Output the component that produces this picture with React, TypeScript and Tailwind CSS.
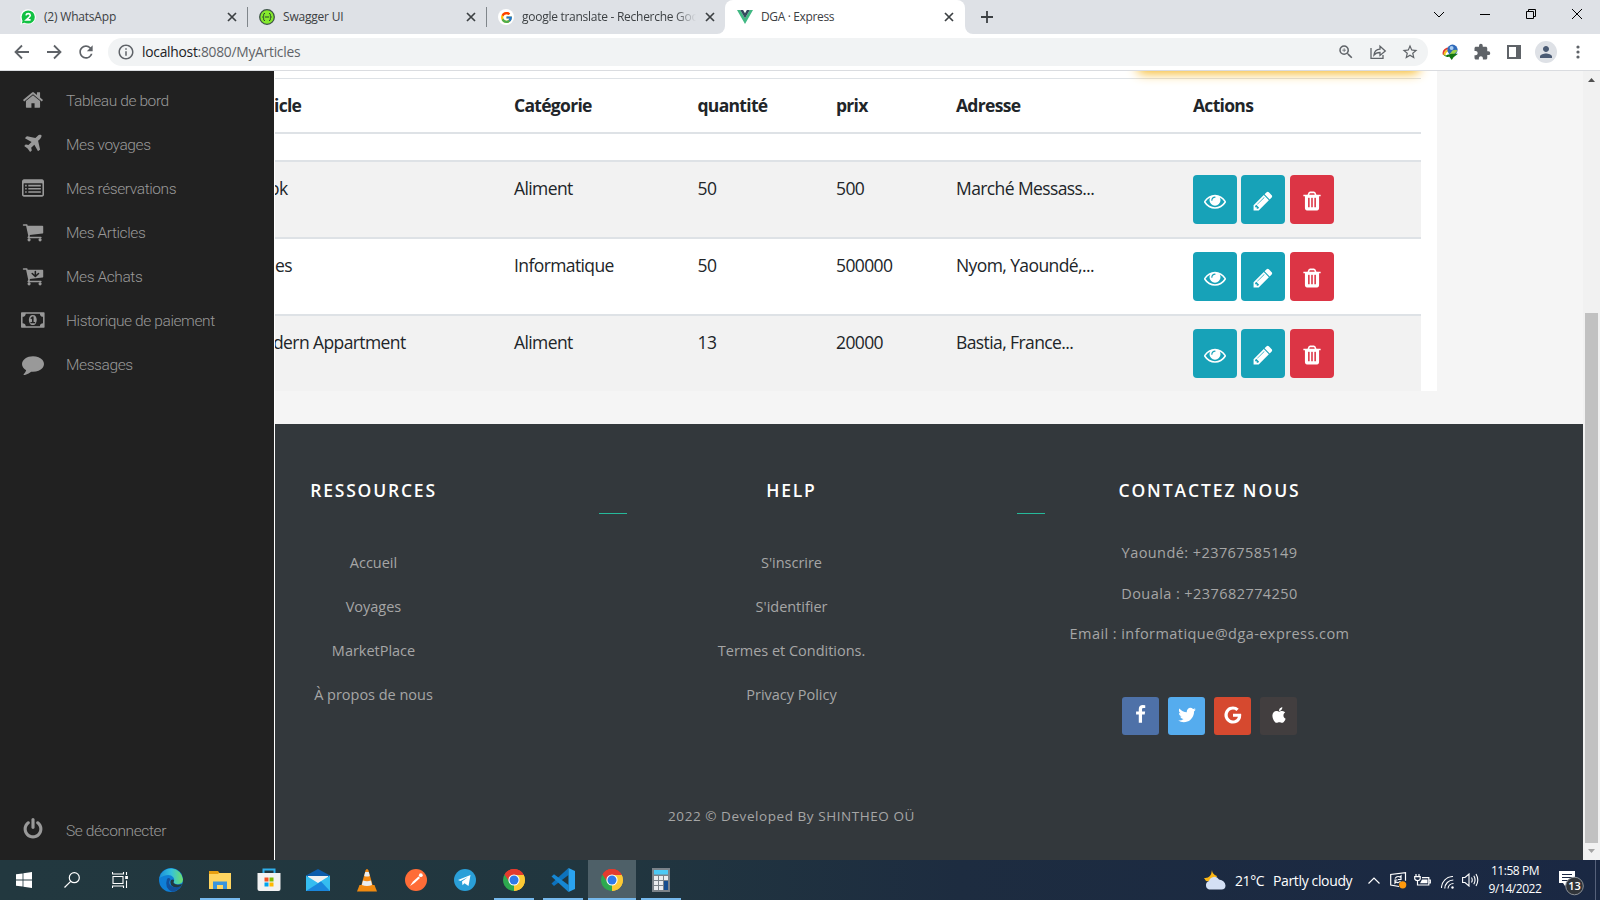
import React from "react";
import { FaApple } from "react-icons/fa";
import { FcGoogle } from "react-icons/fc";
import { MdExtension, MdInfoOutline, MdOutlineZoomIn, MdPerson, MdRefresh, MdStarBorder } from "react-icons/md";

const glyphs = {
  home: "M1472 992v480q0 26-19 45t-45 19h-384v-384h-256v384h-384q-26 0-45-19t-19-45v-480q0-1 .5-3t.5-3l575-474 575 474q1 2 1 6zm223-69l-62 74q-8 9-21 11h-3q-13 0-21-7l-692-577-692 577q-12 8-24 7-13-2-21-11l-62-74q-8-10-7-23.5t11-21.5l719-599q32-26 76-26t76 26l244 204v-195q0-14 9-23t23-9h192q14 0 23 9t9 23v408l219 182q10 8 11 21.5t-7 23.5z",
  plane: "M1568 160q44 52 12 148t-108 172l-161 161 160 696q5 19-12 33l-128 96q-7 6-19 6-4 0-7-1-15-3-21-16l-279-508-259 259 53 194q5 17-8 31l-96 96q-9 9-23 9h-2q-15-2-24-13l-189-252-252-189q-11-7-13-23-1-13 9-25l96-97q9-9 23-9 6 0 8 1l194 53 259-259-508-279q-14-8-17-24-2-16 9-27l128-128q14-13 30-8l665 159 160-160q76-76 172-108t148 12z",
  list: "M160 192h1472q66 0 113 47t47 113v1088q0 66-47 113t-113 47h-1472q-66 0-113-47t-47-113v-1088q0-66 47-113t113-47zM160 512q-32 0-32 32v896q0 32 32 32h1472q32 0 32-32v-896q0-32-32-32zM256 640h128v128h-128zM256 896h128v128h-128zM256 1152h128v128h-128zM512 640h1024v128h-1024zM512 896h1024v128h-1024zM512 1152h1024v128h-1024z",
  cart: "M704 1536q0 52-38 90t-90 38-90-38-38-90 38-90 90-38 90 38 38 90zm896 0q0 52-38 90t-90 38-90-38-38-90 38-90 90-38 90 38 38 90zm128-1088v512q0 24-16.5 42.5t-40.5 21.5l-1044 122q13 60 13 70 0 16-24 64h920q26 0 45 19t19 45-19 45-45 19h-1024q-26 0-45-19t-19-45q0-11 8-31.5t16-36 21.5-40 15.5-29.5l-177-823h-204q-26 0-45-19t-19-45 19-45 45-19h256q16 0 28.5 6.5t19.5 15.5 13 24.5 8 26 5.5 29.5 4.5 26h1201q26 0 45 19t19 45z",
  arrowDown: "M1408 697q0-26-19-45t-45-19q-26 0-45 19l-147 146v-270q0-26-19-45t-45-19-45 19-19 45v270l-147-146q-19-19-45-19t-45 19-19 45 19 45l256 230q19 19 45 19t45-19l256-230q19-19 19-45z",
  money: "M768 1152h384v-96h-128v-448h-114l-148 137 77 80q42-37 55-57h2v288h-128v96zm512-256q0 70-21 142t-59.5 134-101.5 101-138 39-138-39-101.5-101-59.5-134-21-142 21-142 59.5-134 101.5-101 138-39 138 39 101.5 101 59.5 134 21 142zm512 256v-512q-106 0-181-75t-75-181h-1152q0 106-75 181t-181 75v512q106 0 181 75t75 181h1152q0-106 75-181t181-75zm128-832v1152q0 26-19 45t-45 19h-1792q-26 0-45-19t-19-45v-1152q0-26 19-45t45-19h1792q26 0 45 19t19 45z",
  comment: "M1792 896q0 174-120 321.5t-326 233-450 85.5q-70 0-145-8-198 175-460 242-49 14-114 22-17 2-30.5-9t-17.5-29v-1q-3-4-.5-12t2-10 4.5-9.5l6-9 7-8.5 8-9q7-8 31-34.5t34.5-38 31-39.5 32.5-51 27-59 26-76q-157-89-247.5-220t-90.5-281q0-130 71-248.5t191-204.5 286-136.5 348-50.5q244 0 450 85.5t326 233 120 321.5z",
  power: "M1664 896q0 156-61 298t-164 245-245 164-298 61-298-61-245-164-164-245-61-298q0-182 80.5-343t226.5-270q43-32 95.5-25t83.5 50q32 42 24.5 94.5t-49.5 84.5q-98 74-151.5 181t-53.5 228q0 104 40.5 198.5t109.5 163.5 163.5 109.5 198.5 40.5 198.5-40.5 163.5-109.5 109.5-163.5 40.5-198.5q0-121-53.5-228t-151.5-181q-42-32-49.5-84.5t24.5-94.5q31-43 84-50t95 25q146 109 226.5 270t80.5 343zm-640-768v640q0 52-38 90t-90 38-90-38-38-90v-640q0-52 38-90t90-38 90 38 38 90z",
  eye: "M1664 960q-152-236-381-353 61 104 61 225 0 185-131.5 316.5t-316.5 131.5-316.5-131.5-131.5-316.5q0-121 61-225-229 117-381 353 133 205 333.5 326.5t434.5 121.5 434.5-121.5 333.5-326.5zm-720-384q0-20-14-34t-34-14q-125 0-214.5 89.5t-89.5 214.5q0 20 14 34t34 14 34-14 14-34q0-86 61-147t147-61q20 0 34-14t14-34zm848 384q0 34-20 69-140 230-376.5 368.5t-499.5 138.5-499.5-139-376.5-368q-20-35-20-69t20-69q140-229 376.5-368t499.5-139 499.5 139 376.5 368q20 35 20 69z",
  pencil: "M491 1536l91-91-235-235-91 91v107h128v128h107zm523-928q0-22-22-22-10 0-17 7l-542 542q-7 7-7 17 0 22 22 22 10 0 17-7l542-542q7-7 7-17zm-54-192l416 416-832 832h-416v-416zm683 96q0 53-37 90l-166 166-416-416 166-165q36-38 90-38 53 0 91 38l235 234q37 39 37 91z",
  trash: "M704 1376v-704q0-14-9-23t-23-9h-64q-14 0-23 9t-9 23v704q0 14 9 23t23 9h64q14 0 23-9t9-23zm256 0v-704q0-14-9-23t-23-9h-64q-14 0-23 9t-9 23v704q0 14 9 23t23 9h64q14 0 23-9t9-23zm256 0v-704q0-14-9-23t-23-9h-64q-14 0-23 9t-9 23v704q0 14 9 23t23 9h64q14 0 23-9t9-23zm-544-992h448l-48-117q-7-9-17-11h-317q-10 2-17 11zm928 32v64q0 14-9 23t-23 9h-96v948q0 83-47 143.5t-113 60.5h-832q-66 0-113-58.5t-47-141.5v-952h-96q-14 0-23-9t-9-23v-64q0-14 9-23t23-9h309l70-167q15-37 54-63t79-26h320q40 0 79 26t54 63l70 167h309q14 0 23 9t9 23z",
  facebook: "M1343 12v264h-157q-86 0-116 36t-30 108v189h293l-39 296h-254v759h-306v-759h-255v-296h255v-218q0-186 104-288.5t277-102.5q147 0 228 12z",
  twitter: "M1684 408q-67 98-162 167 1 14 1 42 0 130-38 259.5t-115.5 248.5-184.5 210.5-258 146-323 54.5q-271 0-496-145 35 4 78 4 225 0 401-138-105-2-188-64.5t-114-159.5q33 5 61 5 43 0 85-11-112-23-185.5-111.5t-73.5-205.5v-4q68 38 146 41-66-44-105-115t-39-154q0-88 44-163 121 149 294.5 238.5t371.5 99.5q-8-38-8-74 0-134 94.5-228.5t228.5-94.5q140 0 236 102 109-21 205-78-37 115-142 178 93-10 186-50z",
  google: "M896 786h725q12 67 12 128 0 217-91 387.5t-259.5 266.5-386.5 96q-157 0-299-60.5t-245-163.5-163.5-245-60.5-299 60.5-299 163.5-245 245-163.5 299-60.5q300 0 515 201l-209 201q-123-119-306-119-129 0-238.5 65t-173.5 176.5-64 243.5 64 243.5 173.5 176.5 238.5 65q87 0 160-24t120-60 82-82 51.5-87 22.5-78h-436v-264z",
};

type GlyphName = keyof typeof glyphs;

function Glyph({ d, wide = false, className = "size-[22px]" }: { d: string; wide?: boolean; className?: string }) {
  return (
    <svg viewBox={wide ? "0 0 1920 1792" : "0 0 1792 1792"} className={className} fill="currentColor" fillRule="evenodd">
      <path d={d} />
    </svg>
  );
}

/* ---------- Browser chrome ---------- */

function CloseX() {
  return (
    <svg viewBox="0 0 10 10" className="size-[10px] shrink-0" stroke="#3c4043" strokeWidth="1.7" fill="none">
      <path d="M1 1l8 8M9 1l-8 8" />
    </svg>
  );
}

function WhatsAppIcon() {
  return (
    <svg viewBox="0 0 16 16" className="size-4 shrink-0">
      <path d="M8.3.3a7.6 7.6 0 1 1-3.6 14.3L.3 15.8l1.2-4A7.6 7.6 0 0 1 8.3.3z" fill="#fff" />
      <circle cx="8.2" cy="8" r="6.6" fill="#12c143" />
      <path d="M1.8 14.4l1-3.4 2.4 2.4z" fill="#12c143" />
      <path d="M6 6.4Q6.3 4.6 8.2 4.6T10.3 6.3Q10.3 7.5 6.3 10.9H10.6" stroke="#fff" strokeWidth="1.6" fill="none" />
    </svg>
  );
}

function SwaggerIcon() {
  return (
    <svg viewBox="0 0 16 16" className="size-4 shrink-0">
      <circle cx="8" cy="8" r="7.3" fill="#85ea2d" stroke="#3d5347" strokeWidth="1.3" />
      <path d="M6 4.4q-1.4 0-1.4 1.3v1q0 1.2-1 1.3 1 .1 1 1.3v1q0 1.3 1.4 1.3M10 4.4q1.4 0 1.4 1.3v1q0 1.2 1 1.3-1 .1-1 1.3v1q0 1.3-1.4 1.3M5.8 8h4.4" stroke="#264030" strokeWidth="1" fill="none" />
    </svg>
  );
}

function VueIcon() {
  return (
    <svg viewBox="0 0 16 14" className="h-[14px] w-4 shrink-0">
      <path d="M0 0h3.2L8 8.3 12.8 0H16L8 14z" fill="#41b883" />
      <path d="M3.2 0h2.9L8 3.3 9.9 0h2.9L8 8.3z" fill="#35495e" />
    </svg>
  );
}

function TabStrip() {
  return (
    <div className="flex h-[34px] shrink-0 items-stretch bg-[#dee1e6] font-['Open_Sans',sans-serif] text-[12px] tracking-[-0.2px] text-[#3c4043]">
      <div className="flex w-[247px] items-center pl-5 pr-[10px]">
        <WhatsAppIcon />
        <span className="ml-2 flex-1 whitespace-nowrap">(2) WhatsApp</span>
        <CloseX />
      </div>
      <div className="my-[7px] w-px bg-[#80868b]" />
      <div className="flex w-[238px] items-center pl-[11px] pr-[10px]">
        <SwaggerIcon />
        <span className="ml-2 flex-1 whitespace-nowrap">Swagger UI</span>
        <CloseX />
      </div>
      <div className="my-[7px] w-px bg-[#80868b]" />
      <div className="flex w-[238px] items-center bg-white">
        <div className="flex h-full w-full items-center rounded-br-lg bg-[#dee1e6] pl-[11px] pr-[10px]">
          <span className="flex size-4 shrink-0 items-center justify-center rounded-full bg-white">
            <FcGoogle size={13} />
          </span>
          <span className="ml-2 w-[174px] overflow-hidden whitespace-nowrap tracking-[-0.27px] [mask-image:linear-gradient(90deg,#000_88%,transparent)]">
            google translate - Recherche Google
          </span>
          <span className="ml-auto flex">
            <CloseX />
          </span>
        </div>
      </div>
      <div className="w-[240px] bg-[#dee1e6]">
        <div className="flex h-full items-center rounded-t-lg bg-white pl-3 pr-[11px]">
          <VueIcon />
          <span className="ml-2 flex-1 whitespace-nowrap tracking-[-0.35px]">DGA · Express</span>
          <CloseX />
        </div>
      </div>
      <div className="flex-1 bg-white">
        <div className="flex h-full items-center rounded-bl-lg bg-[#dee1e6] pl-4">
          <svg viewBox="0 0 12 12" className="size-3" stroke="#3c4043" strokeWidth="1.8">
            <path d="M6 0v12M0 6h12" />
          </svg>
          <div className="ml-auto flex h-[28px] items-center self-start text-black">
            <svg viewBox="0 0 46 28" className="h-7 w-[46px]" stroke="currentColor" fill="none">
              <path d="M18 12l5 5 5-5" />
            </svg>
            <svg viewBox="0 0 46 28" className="h-7 w-[46px]" stroke="currentColor" fill="none">
              <path d="M18 14.5h10" />
            </svg>
            <svg viewBox="0 0 46 28" className="h-7 w-[46px]" stroke="currentColor" fill="none">
              <path d="M18.5 11.5h7v7h-7zM20.5 11.5v-2h7v7h-2" />
            </svg>
            <svg viewBox="0 0 46 28" className="h-7 w-[46px]" stroke="currentColor" fill="none">
              <path d="M18 9l10 10M28 9L18 19" />
            </svg>
          </div>
        </div>
      </div>
    </div>
  );
}

function Toolbar() {
  return (
    <div className="flex h-[37px] shrink-0 items-center border-b border-[#dadce0] bg-white text-[#5f6368]">
      <div className="flex w-[108px] items-center gap-[14px] pl-[13px]">
        <svg viewBox="0 0 18 18" className="size-[18px]" stroke="currentColor" strokeWidth="1.8" fill="none">
          <path d="M16 9H3M9 2.5L2.5 9 9 15.5" />
        </svg>
        <svg viewBox="0 0 18 18" className="size-[18px]" stroke="currentColor" strokeWidth="1.8" fill="none">
          <path d="M2 9h13M9 2.5L15.500 9 9 15.500" />
        </svg>
        <MdRefresh size={20} className="-ml-px" />
      </div>
      <div className="flex h-7 w-[1320px] items-center rounded-full bg-[#f1f3f4] pl-[9px] pr-[9px]">
        <MdInfoOutline size={18} />
        <span className="ml-[7px] flex-1 pt-px font-['Open_Sans',sans-serif] text-[13.8px] tracking-[-0.25px]">
          <span className="text-[#202124]">localhost</span>:8080/MyArticles
        </span>
        <div className="flex items-center gap-[14px]">
          <MdOutlineZoomIn size={18} />
          <svg viewBox="0 0 18 18" className="size-[18px]" stroke="currentColor" strokeWidth="1.3" fill="none">
            <path d="M2 5v10.300h12V12M5 12q.5-5.500 6-5.800V3.300L16.300 8 11 12.400V9.500q-4 0-6 2.500z" />
          </svg>
          <MdStarBorder size={18} />
        </div>
      </div>
      <div className="flex flex-1 items-center">
        <svg viewBox="0 0 18 18" className="ml-[14px] mr-px size-4">
          <path d="M2 12a6.500 5.500 0 0 1 8-7" stroke="#e23b2e" strokeWidth="2" fill="none" />
          <path d="M3 13a6 5 0 0 1 7-6" stroke="#f5c518" strokeWidth="2.200" fill="none" />
          <circle cx="11.800" cy="6.500" r="5.800" fill="#2f6abb" />
          <circle cx="10.800" cy="4.500" r="2.200" fill="#a9cdf0" />
          <path d="M12 7q4-1 5 0t-4 5-4-1z" fill="#9bd34a" />
          <path d="M1 11q3 5 7 3l3 4 2-3 5-4-7 0-5 1q-2 2-5-1z" fill="#127512" />
        </svg>
        <MdExtension size={18} className="ml-[14px]" />
        <svg viewBox="0 0 14 14" className="ml-4 size-[14px]">
          <path d="M0 0h14v14H0zM2 2v10h7V2z" fill="currentColor" fillRule="evenodd" />
        </svg>
        <span className="ml-[14px] flex size-[22px] items-center justify-center rounded-full bg-[#dee1e6] text-[#4a5a73]">
          <MdPerson size={18} />
        </span>
        <svg viewBox="0 0 4 14" className="ml-[19px] h-[14px] w-1" fill="currentColor">
          <circle cx="2" cy="2" r="1.600" />
          <circle cx="2" cy="7" r="1.600" />
          <circle cx="2" cy="12" r="1.600" />
        </svg>
      </div>
    </div>
  );
}

/* ---------- Sidebar ---------- */

const menu: { label: string; icon: GlyphName; wide?: boolean }[] = [
  { label: "Tableau de bord", icon: "home" },
  { label: "Mes voyages", icon: "plane" },
  { label: "Mes réservations", icon: "list" },
  { label: "Mes Articles", icon: "cart" },
  { label: "Mes Achats", icon: "cart" },
  { label: "Historique de paiement", icon: "money", wide: true },
  { label: "Messages", icon: "comment" },
];

function Sidebar() {
  return (
    <nav className="flex w-[275px] shrink-0 flex-col border-r border-white bg-[#212121] pt-[7px] font-['Roboto',sans-serif] text-[15.500px] font-light tracking-[-0.4px] text-[#999]">
      {menu.map((m) => (
        <div key={m.label} className="flex h-11 items-center">
          <span className="flex w-[66px] justify-center pb-px">
            <Glyph
              d={m.label === "Mes Achats" ? glyphs.cart + glyphs.arrowDown : glyphs[m.icon]}
              wide={m.wide}
              className={m.wide ? "h-[22px] w-[23.6px]" : "size-[22px]"}
            />
          </span>
          <span className="pt-1">{m.label}</span>
        </div>
      ))}
      <div className="mb-[7px] mt-auto flex h-11 items-center">
        <span className="flex w-[66px] justify-center pb-1">
          <Glyph d={glyphs.power} />
        </span>
        <span className="pt-px">Se déconnecter</span>
      </div>
    </nav>
  );
}

/* ---------- Articles table ---------- */

const cols = "grid grid-cols-[239px_183.5px_138.5px_120px_237px_228px]";

const rows = [
  { name: "ok", shift: "-ml-1.5", cat: "Aliment", qty: "50", price: "500", addr: "Marché Messass...", bg: "bg-[#f2f2f2]" },
  { name: "es", shift: "ml-0", cat: "Informatique", qty: "50", price: "500000", addr: "Nyom, Yaoundé,...", bg: "bg-white" },
  { name: "dern Appartment", shift: "-ml-0.5", cat: "Aliment", qty: "13", price: "20000", addr: "Bastia, France...", bg: "bg-[#f2f2f2]" },
];

function ActionButton({ icon, color }: { icon: GlyphName; color: string }) {
  return (
    <button className={`flex h-[49px] w-11 items-center justify-center rounded pt-[3px] text-white ${color}`}>
      <Glyph d={glyphs[icon]} />
    </button>
  );
}

function ArticlesTable() {
  return (
    <div className="relative h-[320px] w-[1162px] overflow-hidden bg-white pt-[7px] font-['Open_Sans',sans-serif] text-[17.500px] leading-6 tracking-[-0.6px] text-[#212529]">
      <div className="w-[1146px]">
        <div className={`${cols} h-14 border-b-2 border-t border-[#dee2e6] pt-[14px] font-bold tracking-[-0.7px]`}>
          <span className="-ml-px">icle</span>
          <span>Catégorie</span>
          <span>quantité</span>
          <span>prix</span>
          <span>Adresse</span>
          <span>Actions</span>
        </div>
        <div className="h-[26px]" />
        {rows.map((r) => (
          <div key={r.name} className={`${cols} h-[77px] border-t-2 border-[#dee2e6] ${r.bg}`}>
            <span className={`pt-[14px] ${r.shift}`}>{r.name}</span>
            <span className="pt-[14px]">{r.cat}</span>
            <span className="pt-[14px]">{r.qty}</span>
            <span className="pt-[14px]">{r.price}</span>
            <span className="pt-[14px]">{r.addr}</span>
            <span className="flex pt-[13px]">
              <ActionButton icon="eye" color="bg-[#17a2b8]" />
              <span className="w-1" />
              <ActionButton icon="pencil" color="bg-[#17a2b8]" />
              <span className="w-[5px]" />
              <ActionButton icon="trash" color="bg-[#dc3545]" />
            </span>
          </div>
        ))}
      </div>
      <div className="absolute -top-10 left-[863px] h-[38px] w-[281px] rounded bg-[#ffc107] shadow-[0_4px_12px_#f5b51d]" />
    </div>
  );
}

/* ---------- Footer ---------- */

function FooterColumn({ title, links }: { title: string; links: string[] }) {
  return (
    <div className="flex flex-col items-center">
      <h3 className="text-[17.500px] font-semibold leading-6 tracking-[1.8px] text-white">{title}</h3>
      <div className="mt-[39px] flex flex-col items-center text-[14.500px] tracking-[-0.02px]">
        {links.map((l) => (
          <a key={l} className="h-11 whitespace-nowrap leading-[44px]">
            {l}
          </a>
        ))}
      </div>
    </div>
  );
}

function Footer() {
  return (
    <footer className="flex flex-1 flex-col bg-[#33383c] pt-[54px] font-['Open_Sans',sans-serif] text-[#a6a6a6]">
      <div className="flex h-[320px]">
        <div className="w-[197px]">
          <FooterColumn title="RESSOURCES" links={["Accueil", "Voyages", "MarketPlace", "À propos de nous"]} />
        </div>
        <div className="ml-[127px] mt-[35px] h-px w-7 bg-[#26b99a]" />
        <div className="ml-[14px] w-[301px]">
          <FooterColumn title="HELP" links={["S'inscrire", "S'identifier", "Termes et Conditions.", "Privacy Policy"]} />
        </div>
        <div className="ml-[75px] mt-[35px] h-px w-7 bg-[#26b99a]" />
        <div className="ml-[14px] flex w-[301px] flex-col items-center">
          <h3 className="text-[17.500px] font-semibold leading-6 tracking-[1.9px] text-white">CONTACTEZ NOUS</h3>
          <div className="mt-[31px] flex flex-col items-center text-[14.500px] leading-[40.500px] tracking-[0.43px]">
            <p className="whitespace-nowrap">Yaoundé: +23767585149</p>
            <p className="whitespace-nowrap">Douala : +237682774250</p>
            <p className="whitespace-nowrap">Email : informatique@dga-express.com</p>
          </div>
          <div className="mt-[42.500px] flex gap-[9px] text-white">
            <a className="flex h-[38px] w-[37px] items-center justify-center rounded-[3px] bg-[#4e71a8] pb-[3px]">
              <Glyph d={glyphs.facebook} className="size-[19px]" />
            </a>
            <a className="flex h-[38px] w-[37px] items-center justify-center rounded-[3px] bg-[#55acee] pb-[3px]">
              <Glyph d={glyphs.twitter} className="size-5" />
            </a>
            <a className="flex h-[38px] w-[37px] items-center justify-center rounded-[3px] bg-[#d6492f] pb-[3px]">
              <Glyph d={glyphs.google} className="size-5" />
            </a>
            <a className="flex h-[38px] w-[37px] items-center justify-center rounded-[3px] bg-[#423e3f] pb-[3px]">
              <FaApple size={18} />
            </a>
          </div>
        </div>
      </div>
      <p className="ml-[366px] mt-2 w-[301px] whitespace-nowrap text-center text-[13.500px] leading-5 tracking-[0.560px]">
        2022 © Developed By SHINTHEO OÜ
      </p>
    </footer>
  );
}

function Scrollbar() {
  return (
    <div className="flex w-[17px] shrink-0 flex-col items-center bg-[#f1f1f1]">
      <svg viewBox="0 0 7 4" className="mt-[7px] h-1 w-[7px]" fill="#505050">
        <path d="M3.500 0L7 4H0z" />
      </svg>
      <div className="mt-[231px] h-[530px] w-[13px] bg-[#c1c1c1]" />
      <svg viewBox="0 0 7 4" className="mt-1.5 h-1 w-[7px]" fill="#a3a3a3">
        <path d="M3.500 4L7 0H0z" />
      </svg>
    </div>
  );
}

/* ---------- Taskbar ---------- */

function TaskItem({ children, running = false, active = false }: { children: React.ReactNode; running?: boolean; active?: boolean }) {
  return (
    <div className={`flex w-12 flex-col items-center ${active ? "bg-[#4e6068]" : ""}`}>
      <div className="flex h-[38px] items-center pt-[2px]">{children}</div>
      {(running || active) && <div className={`h-[2px] bg-[#76b9ed] ${active ? "w-12" : "w-10"}`} />}
    </div>
  );
}

function ChromeIcon() {
  return (
    <svg viewBox="0 0 22 22" className="size-[22px]">
      <path d="M11 11L1.500 5.500A11 11 0 0 1 20.500 5.500z" fill="#e33b2e" />
      <path d="M11 11l9.500-5.500A11 11 0 0 1 11 22z" fill="#fcc934" />
      <path d="M11 11v11A11 11 0 0 1 1.500 5.500z" fill="#2da94f" />
      <path d="M11 6h9.700A11 11 0 0 0 1.500 5.500L6.500 13z" fill="#e33b2e" />
      <path d="M15.500 13.500L11 22A11 11 0 0 0 20.700 6H11z" fill="#fcc934" />
      <circle cx="11" cy="11" r="5.600" fill="#fff" />
      <circle cx="11" cy="11" r="4.500" fill="#3079e8" />
    </svg>
  );
}

function Taskbar() {
  return (
    <div className="flex h-10 shrink-0 bg-[linear-gradient(90deg,#22383f_0%,#21363f_38%,#1d2c40_60%,#1a2843_100%)] font-['Open_Sans',sans-serif] text-white">
      <TaskItem>
        <svg viewBox="0 0 16 16" className="size-4" fill="#fff">
          <path d="M0 2.300L6.600 1.400v6.200H0zM7.400 1.300L16 0v7.600H7.400zM0 8.400h6.600v6.200L0 13.700zM7.400 8.400H16V16l-8.600-1.200z" />
        </svg>
      </TaskItem>
      <TaskItem>
        <svg viewBox="0 0 16 16" className="size-4" stroke="#fff" strokeWidth="1.200" fill="none">
          <circle cx="10.300" cy="5.700" r="5" />
          <path d="M6.700 9.300L.500 15.500" />
        </svg>
      </TaskItem>
      <TaskItem>
        <svg viewBox="0 0 17 16" className="h-4 w-[17px]" stroke="#fff" strokeWidth="1.100" fill="none">
          <path d="M1 4.500h10v7H1zM.500 0v2h11V0M.500 16v-2h11v2M14.500 0v3M14.500 8.500V16" />
          <path d="M13.200 4h2.700v3h-2.700z" fill="#fff" stroke="none" />
        </svg>
      </TaskItem>
      <div className="ml-[3px] flex gap-px">
        <TaskItem>
          <svg viewBox="0 0 24 24" className="size-6">
            <defs>
              <linearGradient id="edgeTop" x1="0" x2="1">
                <stop offset="0" stopColor="#1b8fd8" />
                <stop offset=".5" stopColor="#35c1dc" />
                <stop offset="1" stopColor="#6fe06a" />
              </linearGradient>
            </defs>
            <circle cx="12" cy="12" r="12" fill="#0f7fd6" />
            <path d="M.3 10A12 12 0 0 1 24 11.500Q23.500 17 17 16q-3-.5-2-2.500 1-4-3-6T.3 10z" fill="url(#edgeTop)" />
            <path d="M8 11Q5 20 13 23.800 19 23 22.500 17.700 15 21 11 17 9 14 11.500 11.500 10 9 8 11z" fill="#12509b" />
            <path d="M12 12q2-1 3 0-.5 2-.5 3 3 3 8.500 1l-.8 2Q15 21 12 17q-1.500-3 0-5z" fill="#22383f" />
          </svg>
        </TaskItem>
        <TaskItem running>
          <svg viewBox="0 0 22 18" className="h-[18px] w-[22px]">
            <path d="M0 0h9l1.500 2H22v5H0z" fill="#e8a010" />
            <path d="M0 3h9l1-1h12v16H0z" fill="#ffd560" />
            <path d="M4 18v-7.500h14V18h-4v-4H8v4z" fill="#3a94dc" />
          </svg>
        </TaskItem>
        <TaskItem>
          <svg viewBox="0 0 24 24" className="size-6">
            <path d="M6.500 6V1.500h11V6" stroke="#2fb0ec" strokeWidth="2" fill="none" />
            <path d="M.500 5h23v16q0 2-2 2h-19q-2 0-2-2z" fill="#f2f2f2" />
            <path d="M7.500 9.500h4v4h-4z" fill="#f25022" />
            <path d="M12.500 9.500h4v4h-4z" fill="#7fba00" />
            <path d="M7.500 14.500h4v4h-4z" fill="#00a4ef" />
            <path d="M12.500 14.500h4v4h-4z" fill="#ffb900" />
          </svg>
        </TaskItem>
        <TaskItem>
          <svg viewBox="0 0 24 22" className="h-[22px] w-6">
            <path d="M0 6.500L12 0l12 6.500V9H0z" fill="#0d5cab" />
            <path d="M2 7h20v7H2z" fill="#f1f1f1" />
            <path d="M0 6.500L12 14l12-7.500V22H0z" fill="#35bdf0" />
            <path d="M0 22L15 12.500 24 22z" fill="#1a86dc" />
          </svg>
        </TaskItem>
        <TaskItem>
          <svg viewBox="0 0 20 23" className="h-[23px] w-5">
            <path d="M2.500 16h15l2.500 6.500H0z" fill="#f08a10" />
            <path d="M10 0q1 0 1.500 1.500l4.500 16q-6 3-12 0l4.500-16Q9 0 10 0z" fill="#f58a12" />
            <path d="M8.200 3h3.600l1 4q-2.800 1-5.600 0zM6 11.500q4 1.500 8 0l1 4.500q-5 2-10.200 0z" fill="#e9edf0" />
          </svg>
        </TaskItem>
        <TaskItem>
          <svg viewBox="0 0 22 22" className="size-[22px]">
            <circle cx="11" cy="11" r="11" fill="#ff6c37" />
            <path d="M5 17l3-4.500 5.500-5 1.500 1.500-5.500 5z" fill="#fff" />
            <circle cx="15.800" cy="6.200" r="1.900" fill="#fff" />
          </svg>
        </TaskItem>
        <TaskItem>
          <svg viewBox="0 0 22 22" className="size-[22px]">
            <circle cx="11" cy="11" r="11" fill="#2a9fd8" />
            <path d="M4 11l12.500-5-2 11-4-2.800-2 2L8 12.500 14 8l-7.500 4z" fill="#fff" />
          </svg>
        </TaskItem>
        <TaskItem running>
          <ChromeIcon />
        </TaskItem>
        <TaskItem running>
          <svg viewBox="0 0 24 24" className="size-6">
            <path d="M17.500 0v7L3 18l-2.500-2.500z" fill="#0d72bd" />
            <path d="M.5 8.500L3 6.200 17.500 17v7z" fill="#1687d3" />
            <path d="M17.500 0L24 3v18l-6.500 3z" fill="#2aa3f0" />
          </svg>
        </TaskItem>
        <TaskItem active>
          <ChromeIcon />
        </TaskItem>
        <TaskItem running>
          <svg viewBox="0 0 18 24" className="h-6 w-[18px]">
            <path d="M0 0h18v24H0z" fill="#7a8289" />
            <path d="M2 2h14v4.500H2z" fill="#4cc9f5" />
            <path d="M2 8h4v4H2zM7 8h4v4H7zM12 8h4v4h-4zM2 13h4v4H2zM7 13h4v4H7zM2 18h4v4H2zM7 18h4v4H7z" fill="#e9ecef" />
            <path d="M12 13h4v9h-4z" fill="#154d90" />
          </svg>
        </TaskItem>
      </div>

      <div className="ml-auto flex w-[396px] items-center">
        <svg viewBox="0 0 22 20" className="h-5 w-[22px]">
          <path d="M8 0q0 4 5 6l-3 6-8-1-2-3q7 1 8-8z" fill="#fcb714" />
          <path d="M5 19.500a4.500 4.500 0 0 1 0-8.500 5.500 5.500 0 0 1 10-1.500q6 1 6.500 6 0 4-4 4z" fill="#d4e0f4" />
        </svg>
        <span className="ml-[9px] w-[38px] whitespace-nowrap pt-px text-[14px] tracking-[-0.4px]">21°C</span>
        <span className="w-[95px] whitespace-nowrap pt-px text-[14px] tracking-[-0.36px]">Partly cloudy</span>
        <svg viewBox="0 0 12 7" className="h-[7px] w-3" stroke="#fff" strokeWidth="1.200" fill="none">
          <path d="M.500 6.500L6 1l5.500 5.500" />
        </svg>
        <svg viewBox="0 0 17 17" className="ml-[10px] size-[17px]" stroke="#fff" strokeWidth="1.200" fill="none">
          <path d="M9 14.500L.700 13V2.500L15.500.700v8M5 6.500q2-3 5-1.500l1-1v3.500H8M10.500 9q-2 2.500-4.500 1l-1 1V8h2.500" />
          <circle cx="12.700" cy="12.800" r="3.600" fill="#ff9a0c" stroke="none" />
        </svg>
        <svg viewBox="0 0 17 12" className="ml-[7px] h-3 w-[17px]" stroke="#fff" strokeWidth="1.200" fill="none">
          <path d="M2 0v2.500M5 0v2.500M.700 2.700h5.500v2Q6 6.500 3.500 6.500T.700 4.700zM3.500 6.500V11h11.300V3.600H8M15 6h1.300v3H15" />
          <path d="M8 5.500h5.500v3.800H6z" fill="#fff" stroke="none" />
        </svg>
        <svg viewBox="0 0 13 13" className="ml-[10px] mt-1 size-[13px]" stroke="#fff" strokeWidth="1.100" fill="none">
          <path d="M.500 12A11.500 11.500 0 0 1 12 .500M3.800 12.500A8.500 8.500 0 0 1 12.300 4M7 12.500a5.500 5.500 0 0 1 5.500-5" />
          <circle cx="11.500" cy="11.500" r="1.200" fill="#fff" stroke="none" />
        </svg>
        <svg viewBox="0 0 17 14" className="ml-2 h-[14px] w-[17px]" stroke="#fff" strokeWidth="1.100" fill="none">
          <path d="M.600 4.500H3L7 1v12L3 9.500H.600zM9.500 4.500q1.500 2.500 0 5M11.800 2.800q2.500 4.200 0 8.400M14 1q3.600 6 0 12" />
        </svg>
        <div className="ml-[7px] w-[58px] whitespace-nowrap text-center text-[12px] leading-[18px] tracking-[-0.45px]">
          <div>11:58 PM</div>
          <div>9/14/2022</div>
        </div>
        <svg viewBox="0 0 27 26" className="ml-[15px] mt-1.5 h-[26px] w-[27px]">
          <path d="M0 1h16v12H9l-3 3-2-3H0z" fill="#fff" />
          <path d="M3 4.500h10M3 7.500h10M3 10.500h6" stroke="#1a2843" strokeWidth="1.100" />
          <circle cx="15.500" cy="16" r="8.800" fill="#303439" stroke="#8c9196" />
          <text x="15.500" y="20" textAnchor="middle" fontSize="11" fontWeight="600" fill="#fff">
            13
          </text>
        </svg>
        <div className="ml-auto mr-1 h-full w-px bg-[#56617a]" />
      </div>
    </div>
  );
}

export default function App() {
  return (
    <div className="flex h-[900px] w-[1600px] flex-col overflow-hidden bg-[#f5f5f5]">
      <TabStrip />
      <Toolbar />
      <div className="flex h-[789px]">
        <Sidebar />
        <main className="flex w-[1308px] flex-col">
          <ArticlesTable />
          <div className="h-[33px]" />
          <Footer />
        </main>
        <Scrollbar />
      </div>
      <Taskbar />
    </div>
  );
}
